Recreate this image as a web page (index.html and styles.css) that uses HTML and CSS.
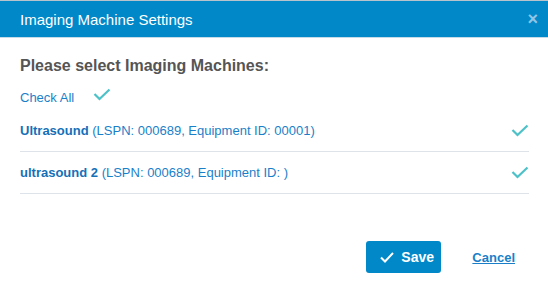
FILE: index.html
```html
<!DOCTYPE html>
<html lang="en">
<head>
    <meta charset="UTF-8">
    <title>Imaging Machine Settings</title>
    <link rel="stylesheet" href="styles.css">
</head>
<body>
    <div class="modal">
        <div class="modal-header">
            <h1>Imaging Machine Settings</h1>
            <span class="close">&times;</span>
        </div>
        <div class="modal-body">
            <h2>Please select Imaging Machines:</h2>
            <div class="check-all">
                <span>Check All</span>
                <svg class="tick" width="18" height="13" viewBox="0 0 18 13"><path d="M1.5 6 L6.5 11 L16.5 1.5" fill="none" stroke="#4cc2c8" stroke-width="2.2"/></svg>
            </div>
            <div class="machine">
                <span><b>Ultrasound</b> (LSPN: 000689, Equipment ID: 00001)</span>
                <svg class="tick" width="18" height="13" viewBox="0 0 18 13"><path d="M1.5 6 L6.5 11 L16.5 1.5" fill="none" stroke="#4cc2c8" stroke-width="2.2"/></svg>
            </div>
            <div class="machine">
                <span><b>ultrasound 2</b> (LSPN: 000689, Equipment ID: )</span>
                <svg class="tick" width="18" height="13" viewBox="0 0 18 13"><path d="M1.5 6 L6.5 11 L16.5 1.5" fill="none" stroke="#4cc2c8" stroke-width="2.2"/></svg>
            </div>
        </div>
        <div class="modal-footer">
            <button class="save-btn">
                <svg width="14" height="11" viewBox="0 0 14 11"><path d="M1 5.5 L5 9.5 L13 1" fill="none" stroke="#fff" stroke-width="2"/></svg>
                Save
            </button>
            <a href="#" class="cancel">Cancel</a>
        </div>
    </div>
</body>
</html>
```

FILE: styles.css
```css
body {
    margin: 0;
    font-family: "Liberation Sans", Arial, sans-serif;
    background: #fff;
}
.modal {
    width: 548px;
    height: 286px;
    border-top: 1px solid #b9c3cb;
    box-sizing: border-box;
}
.modal-header {
    background-color: #0088c9;
    height: 36px;
    border-bottom: 1px solid #c6dbe8;
    display: flex;
    align-items: center;
    justify-content: space-between;
    padding: 0 10px 0 20px;
}
.modal-header h1 {
    margin: 0;
    font-size: 15px;
    font-weight: normal;
    color: #fff;
}
.close {
    color: #8fc6e6;
    font-size: 18px;
    font-weight: bold;
    line-height: 1;
}
.modal-body {
    padding: 19px 19px 0 20px;
}
.modal-body h2 {
    margin: 0 0 9px 0;
    font-size: 16px;
    line-height: 18px;
    color: #555;
}
.check-all {
    display: flex;
    align-items: center;
    gap: 19px;
    color: #1a7fc9;
    font-size: 13px;
    height: 26px;
}
.check-all .tick {
    margin-top: -5px;
}
.machine {
    display: flex;
    justify-content: space-between;
    align-items: center;
    height: 41px;
    border-bottom: 1px solid #dde3e8;
    color: #1a7fc9;
    font-size: 13px;
}
.machine b {
    color: #1570b8;
}
.modal-footer {
    display: flex;
    align-items: center;
    justify-content: flex-end;
    gap: 31px;
    padding: 47px 33px 0 0;
}
.save-btn {
    display: flex;
    align-items: center;
    gap: 7px;
    background-color: #0088c9;
    color: #fff;
    border: none;
    border-radius: 3px;
    width: 75px;
    height: 32px;
    padding: 0 0 0 14px;
    font-family: inherit;
    font-size: 14px;
    font-weight: bold;
}
.cancel {
    color: #1a7fc9;
    font-size: 13px;
    font-weight: bold;
    text-decoration: underline;
}
```
